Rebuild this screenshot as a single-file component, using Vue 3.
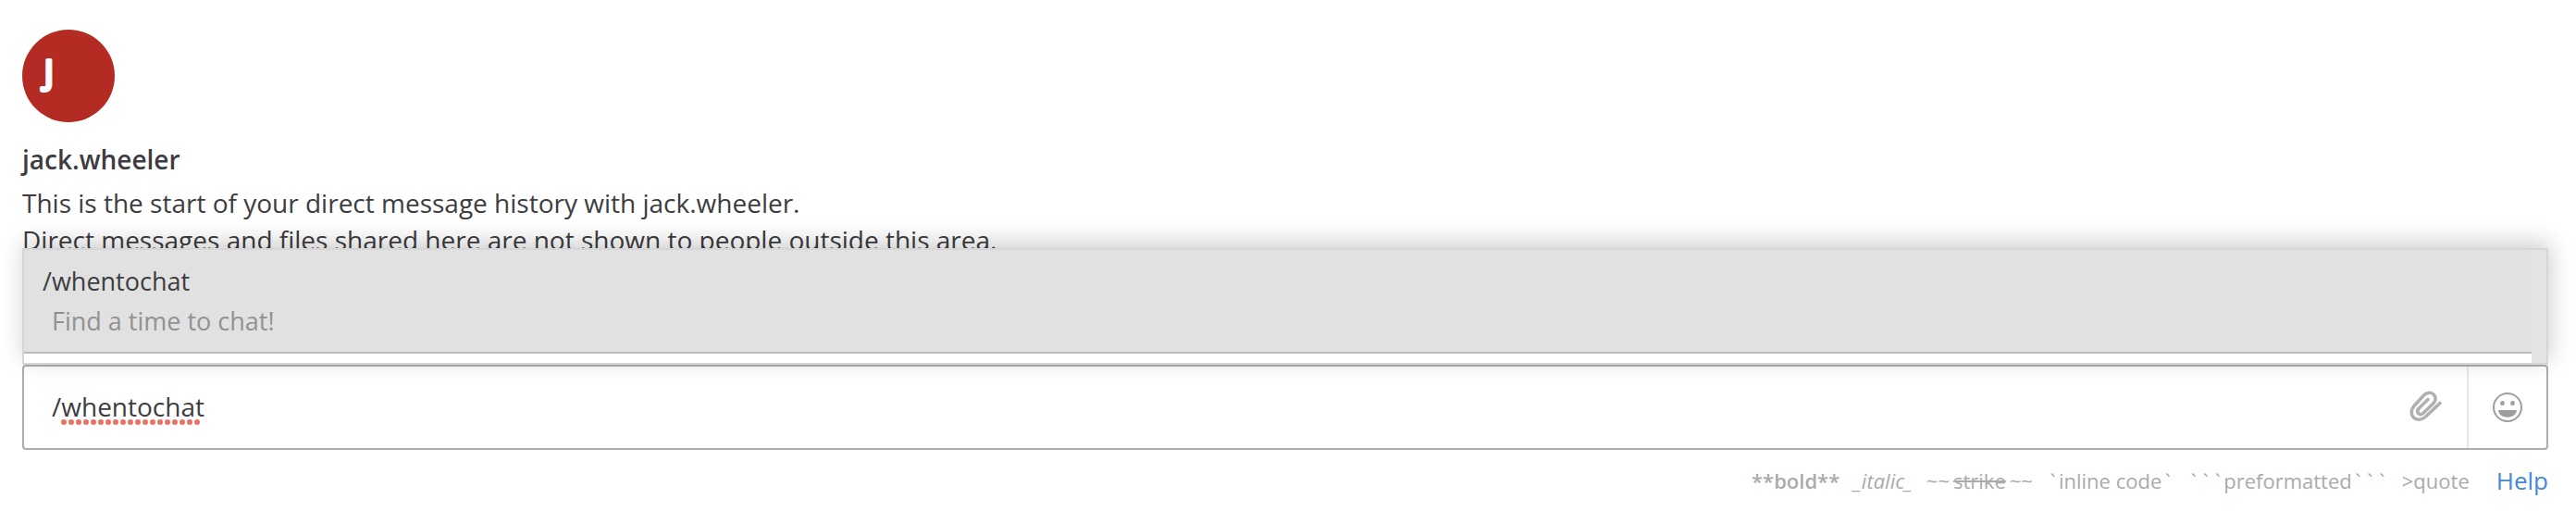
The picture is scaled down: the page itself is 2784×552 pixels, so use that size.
<script setup>
import { ref } from 'vue'

const user = 'jack.wheeler'
const message = ref('/whentochat')
const suggestions = [{ command: '/whentochat', description: 'Find a time to chat!' }]
</script>

<template>
  <main class="channel">
    <section class="intro">
      <svg class="avatar" viewBox="0 0 100 100" role="img" :aria-label="user">
        <circle cx="50" cy="50" r="50" fill="#b32b22" />
        <text class="initial" x="24" y="59">J</text>
      </svg>
      <h1 class="name">{{ user }}</h1>
      <p class="history">
        This is the start of your direct message history with {{ user }}.<br />
        Direct messages and files shared here are not shown to people outside this area.
      </p>
    </section>

    <form class="composer" @submit.prevent>
      <div class="suggestions">
        <ul class="options">
          <li v-for="item in suggestions" :key="item.command">
            <button type="button" class="option">
              <span class="command">{{ item.command }}</span>
              <span class="description">{{ item.description }}</span>
            </button>
          </li>
        </ul>
        <div class="track"></div>
      </div>

      <div class="box">
        <div class="field">
          <input v-model="message" class="message" type="text" aria-label="Message" spellcheck="false" />
          <span class="misspelled"></span>
        </div>
        <button type="button" class="tool attach" aria-label="Attach file">
          <svg width="36" height="34" viewBox="0 0 36 34" fill="none" stroke="#b0b0b0" stroke-width="3.6" stroke-linecap="round" stroke-linejoin="round">
            <path d="M33 13.500 L17 28.500 C13 32 7.500 32 4.500 29 C1.300 25.700 1.300 20.500 5 16.500 L15.500 5 C19 1.500 23.500 1.300 26.300 4.200 C29 7 28.500 11 25.300 14.300 L15 24.300 C13.200 26 11 26 9.700 24.700 C8.300 23.200 8.500 21 10 19.300 L20 9.500" />
          </svg>
        </button>
        <button type="button" class="tool emoji" aria-label="Insert emoji">
          <svg width="32" height="32" viewBox="0 0 32 32">
            <circle cx="16" cy="16" r="15" fill="none" stroke="#9e9e9e" stroke-width="2" />
            <ellipse cx="10.500" cy="11.500" rx="2.300" ry="2.600" fill="#9e9e9e" />
            <ellipse cx="21.500" cy="11.500" rx="2.300" ry="2.600" fill="#9e9e9e" />
            <path d="M6 19 H26 C25.500 24 21.500 26.700 16 26.700 C10.500 26.700 6.500 24 6 19 Z" fill="#9e9e9e" />
          </svg>
        </button>
      </div>
    </form>

    <footer class="help">
      <b>**bold**</b>
      <i>_italic_</i>
      <span class="strike"><span>~~</span><s>strike</s><span>~~</span></span>
      <span><span class="tick">`</span>inline code<span class="tick">`</span></span>
      <span><span v-for="n in 3" :key="n" class="tick">`</span>preformatted<span v-for="n in 3" :key="n" class="tick">`</span></span>
      <span>&gt;quote</span>
      <a href="#help">Help</a>
    </footer>
  </main>
</template>

<style>
body {
  background: #fff;
}
</style>

<style scoped>
.channel {
  box-sizing: border-box;
  display: flex;
  flex-direction: column;
  min-height: 100vh;
  padding: 32px 30px 0 24px;
  font-family: "Open Sans", sans-serif;
  font-size: 27px;
  font-variant-ligatures: none;
  color: #3d3c40;
}
.intro {
  padding-bottom: 115px;
}
.avatar {
  display: block;
  width: 100px;
  height: 100px;
}
.initial {
  font-size: 36px;
  fill: #fff;
  stroke: #fff;
  stroke-width: 4px;
  stroke-linejoin: round;
}
.name {
  margin: 20px 0 7px;
  font-size: 28px;
  font-weight: 600;
  line-height: 40px;
}
.history {
  margin: 0;
  font-size: 28px;
  line-height: 40px;
}
.composer {
  position: relative;
}
.suggestions {
  position: absolute;
  right: 0;
  bottom: 100%;
  left: 0;
  display: flex;
  border: 2px solid #d6d6d6;
  background: #fff;
  box-shadow: 2px -6px 24px rgba(0, 0, 0, 0.2);
}
.options {
  flex: 1;
  margin: 0;
  padding: 0 0 10px;
  list-style: none;
}
.option {
  display: block;
  width: 100%;
  padding: 12px 20px;
  border: 0;
  border-bottom: 2px solid #bbb;
  background: #e1e1e1;
  font: inherit;
  line-height: 43px;
  color: inherit;
  text-align: left;
}
.command,
.description {
  display: block;
}
.description {
  padding-left: 10px;
  color: #919192;
}
.track {
  width: 16px;
  background: #e4e4e4;
}
.box {
  display: flex;
  height: 88px;
  border: 2px solid #adadad;
  border-radius: 4px;
}
.field {
  position: relative;
  flex: 1;
  display: flex;
}
.message {
  flex: 1;
  min-width: 0;
  padding: 0 30px 2px;
  border: 0;
  outline: 0;
  background: transparent;
  font: inherit;
  font-size: 28px;
  color: inherit;
}
.misspelled {
  position: absolute;
  top: 57px;
  left: 39px;
  width: 152px;
  height: 6px;
  background: radial-gradient(circle at 4px 3px, #ee6d61 2px, #f29b92 3px, transparent 3px) 0 0 / 8px 6px repeat-x;
}
.tool {
  display: flex;
  align-items: center;
  justify-content: center;
  padding: 0;
  border: 0;
  background: transparent;
}
.attach {
  width: 86px;
  padding: 0 2px 2px 0;
}
.emoji {
  width: 86px;
  border-left: 2px solid #e6e6e6;
}
.help {
  display: flex;
  justify-content: flex-end;
  align-items: center;
  gap: 15px;
  padding-top: 15px;
  font-size: 22px;
  line-height: 36px;
  color: #aaa;
}
.help b {
  font-weight: 600;
}
.strike {
  display: flex;
  gap: 4px;
}
.tick {
  display: inline-block;
  width: 13px;
  text-align: center;
}
.help a {
  margin-left: 14px;
  font-size: 26px;
  color: #4389d6;
  text-decoration: none;
}
</style>
